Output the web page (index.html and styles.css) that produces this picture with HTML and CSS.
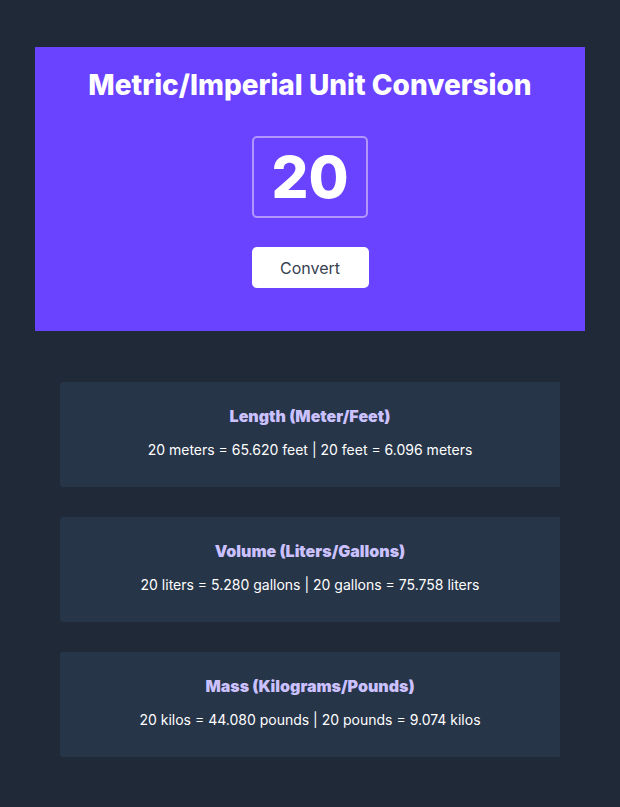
FILE: index.html
```html
<!DOCTYPE html>
<html>
<head>
<meta charset="utf-8">
<link rel="stylesheet" href="styles.css">
</head>
<body>
<main class="app">
  <section class="hero">
    <h1 class="title">Metric/Imperial Unit Conversion</h1>
    <input class="num" type="text" value="20">
    <button class="btn">Convert</button>
  </section>
  <section class="results">
    <div class="card">
      <h2 class="card-title">Length (Meter/Feet)</h2>
      <p class="card-text">20 meters = 65.620 feet | 20 feet = 6.096 meters</p>
    </div>
    <div class="card">
      <h2 class="card-title">Volume (Liters/Gallons)</h2>
      <p class="card-text">20 liters = 5.280 gallons | 20 gallons = 75.758 liters</p>
    </div>
    <div class="card">
      <h2 class="card-title">Mass (Kilograms/Pounds)</h2>
      <p class="card-text">20 kilos = 44.080 pounds | 20 pounds = 9.074 kilos</p>
    </div>
  </section>
</main>
</body>
</html>
```
FILE: styles.css
```css
* { box-sizing: border-box; }
html, body { margin: 0; padding: 0; }
body {
  background: #1F2937;
  font-family: Inter, "Noto Sans", sans-serif;
  min-height: 807px;
}
.app {
  width: 550px;
  margin: 47px auto 0;
}
.hero {
  background: #6943FF;
  height: 284px;
  display: flex;
  flex-direction: column;
  align-items: center;
  padding-top: 21px;
}
.title {
  margin: 0;
  color: #fff;
  font-size: 28px;
  line-height: 34px;
  font-weight: 800;
}
.num {
  margin-top: 34px;
  width: 116px;
  height: 82px;
  background: transparent;
  border: 2px solid #B295FF;
  border-radius: 5px;
  color: #fff;
  font-family: inherit;
  font-size: 58px;
  font-weight: 800;
  text-align: center;
  padding: 0;
  outline: none;
}
.btn {
  margin-top: 29px;
  width: 117px;
  height: 41px;
  background: #fff;
  border: none;
  border-radius: 5px;
  color: #374151;
  font-family: inherit;
  font-size: 16px;
}
.results {
  margin-top: 51px;
  display: flex;
  flex-direction: column;
  align-items: center;
  gap: 30px;
}
.card {
  width: 500px;
  height: 105px;
  background: #273549;
  border-radius: 3px 0 0 3px;
  text-align: center;
  padding-top: 24px;
}
.card-title {
  margin: 0;
  color: #CCC1FF;
  font-size: 16px;
  line-height: 20px;
  font-weight: 900;
}
.card-text {
  margin: 14px 0 0;
  color: #fff;
  font-size: 14px;
  line-height: 20px;
}
```
